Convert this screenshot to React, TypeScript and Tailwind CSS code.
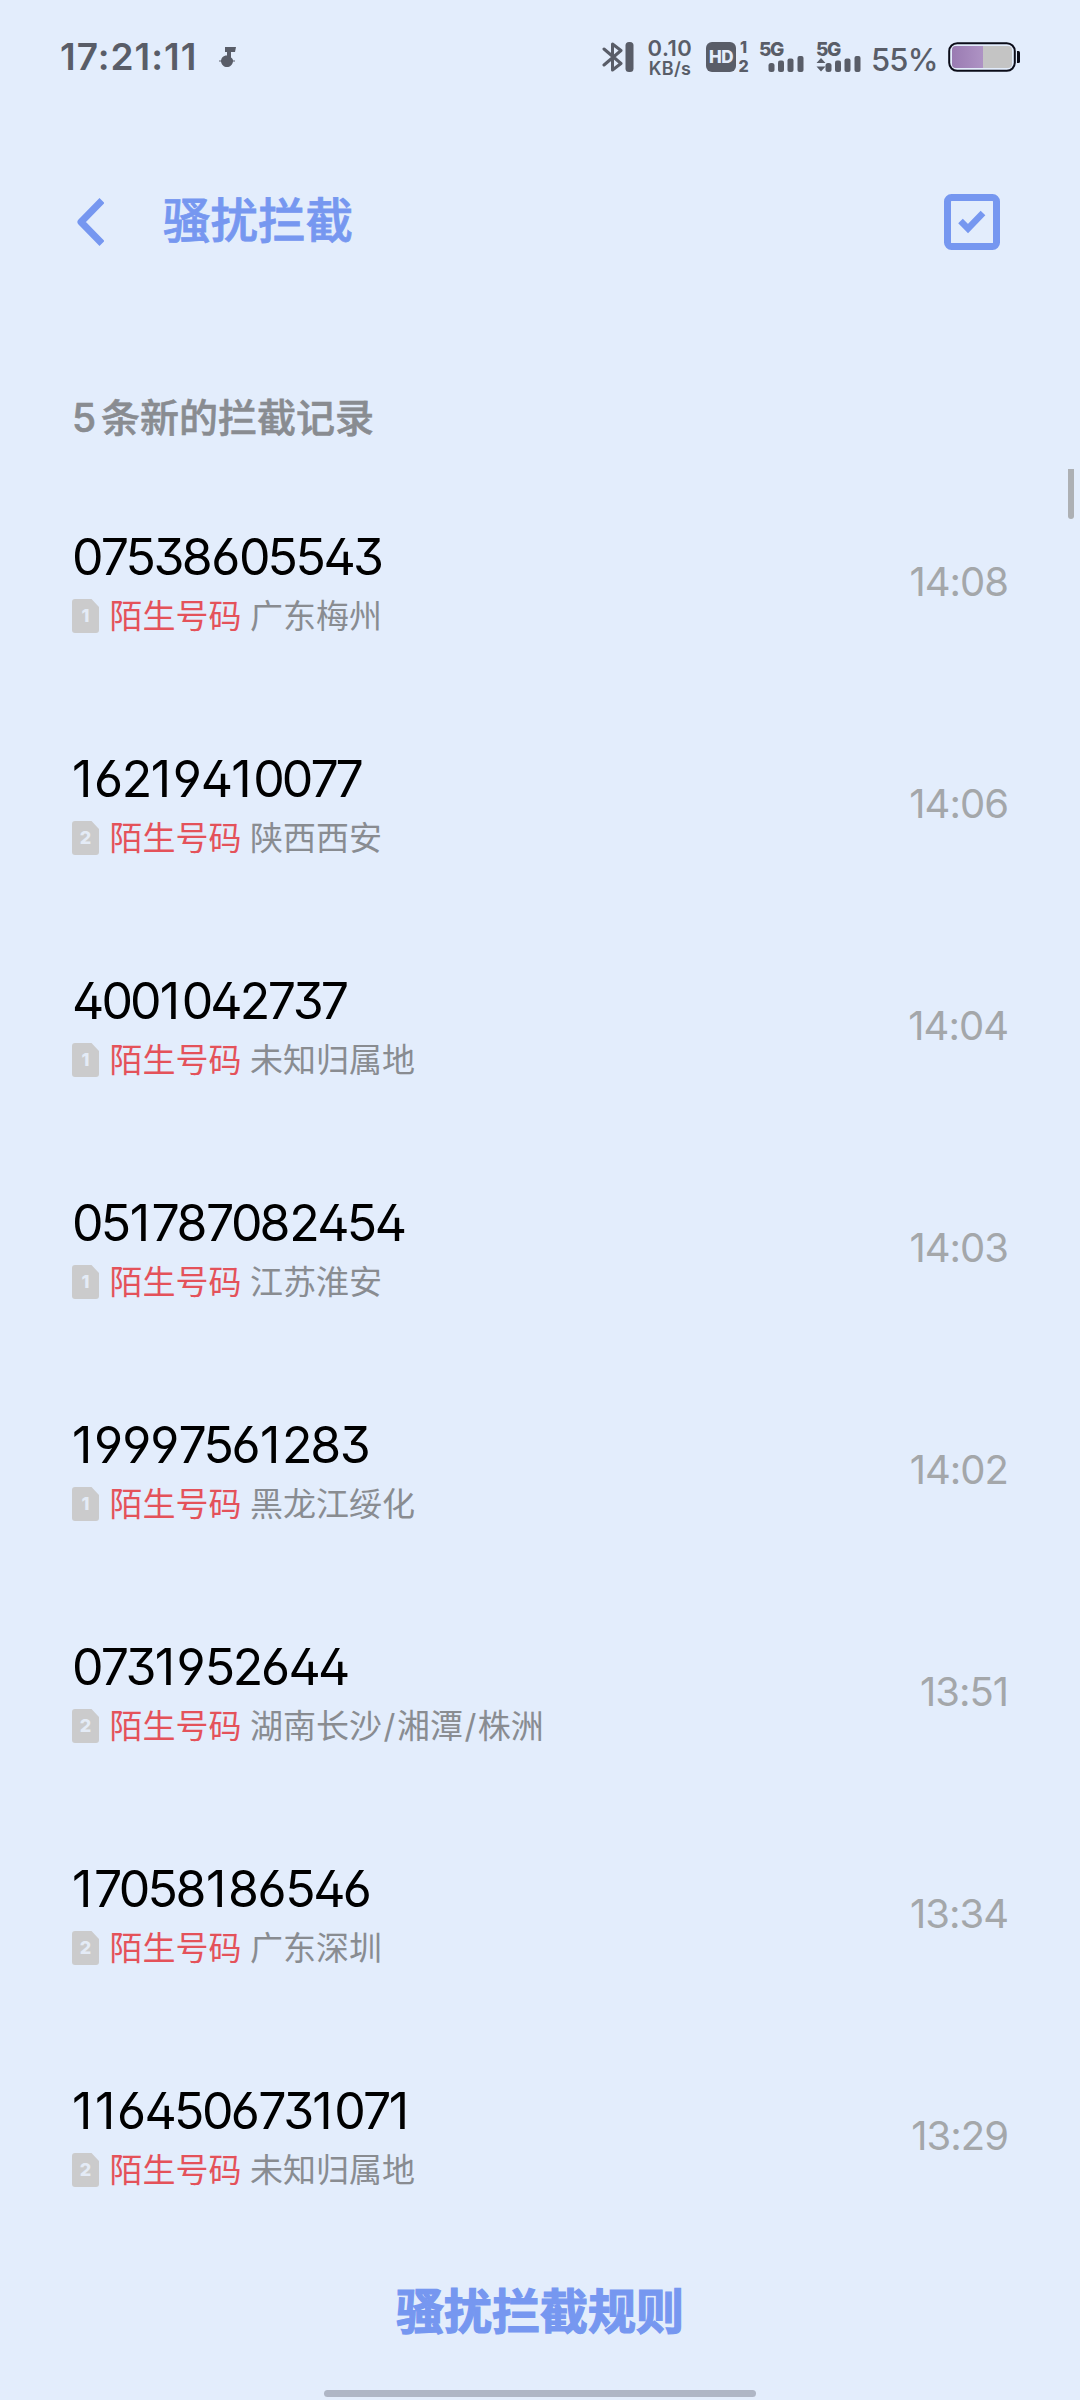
import React from 'react';

interface BlockedCall {
  number: string;
  sim: 1 | 2;
  place: string;
  time: string;
}

const calls: BlockedCall[] = [
  { number: '07538605543', sim: 1, place: '广东梅州', time: '14:08' },
  { number: '16219410077', sim: 2, place: '陕西西安', time: '14:06' },
  { number: '4001042737', sim: 1, place: '未知归属地', time: '14:04' },
  { number: '051787082454', sim: 1, place: '江苏淮安', time: '14:03' },
  { number: '19997561283', sim: 1, place: '黑龙江绥化', time: '14:02' },
  { number: '0731952644', sim: 2, place: '湖南长沙/湘潭/株洲', time: '13:51' },
  { number: '17058186546', sim: 2, place: '广东深圳', time: '13:34' },
  { number: '1164506731071', sim: 2, place: '未知归属地', time: '13:29' },
];

const digitSpacing: Record<string, string> = {
  '0': '-mr-[0.5px]',
  '1': 'ml-[1px] mr-[4px] first:ml-0',
  '3': '-mr-[0.5px]',
  '4': '-mr-[0.5px]',
  '6': 'mr-[1px]',
  '7': '-mr-[1px]',
  '8': 'mr-[1px]',
  '9': 'mr-[1.5px]',
};

const MusicIcon = () => (
  <svg width="18" height="22" viewBox="0 0 18 22" className="ml-[24px] mt-[1px]" fill="currentColor">
    <path d="M6 0h11l-1 5h-4v5.500c1.500 1 2 2 2 3h2v1h-2c-.5 3.500-3 5.500-6 5.500s-5.500-2-6-5.500H0v-1h2c.3-2.600 2-4.500 4.500-5H8V5H6z" />
  </svg>
);

const BluetoothIcon = () => (
  <svg width="32" height="30" viewBox="0 0 32 30" fill="none">
    <path d="M2 7l17 14.500L10.500 28V2L19 8.500 2 23" stroke="currentColor" strokeWidth="3" strokeLinejoin="round" strokeLinecap="round" />
    <rect x="23.500" y="0" width="8" height="30" rx="3.500" fill="currentColor" />
  </svg>
);

const SignalIcon = ({ data }: { data?: boolean }) => (
  <div className="relative h-[30px] w-[46px]">
    <span className="absolute left-0 top-0 text-[19px] font-extrabold leading-[15px] tracking-[-1.5px]">5G</span>
    <svg width="46" height="30" viewBox="0 0 46 30" fill="currentColor" className="absolute inset-0">
      {data && <path d="M5 16l4.500 5h-9zM5 29.500l4.500-5h-9z" />}
      <rect x="9.500" y="21" width="6" height="9" rx="2.500" />
      <rect x="19" y="18.500" width="6" height="11.500" rx="2" />
      <rect x="28.500" y="16.500" width="6" height="13.500" rx="2" />
      <rect x="38.500" y="14" width="6" height="16" rx="2" />
    </svg>
  </div>
);

const BatteryIcon = () => (
  <svg width="73" height="30" viewBox="0 0 73 30" fill="none">
    <defs>
      <linearGradient id="charge" x1="0" y1="0" x2="1" y2="0">
        <stop offset="0" stopColor="#9a7bb2" />
        <stop offset="1" stopColor="#ae93c4" />
      </linearGradient>
    </defs>
    <rect x="1.200" y="1.200" width="65.600" height="27.600" rx="8" stroke="#0b0c18" strokeWidth="2" />
    <rect x="4" y="4" width="60" height="22" rx="4" fill="#c4c4c4" />
    <path d="M8 4h27v22H8a4 4 0 0 1-4-4V8a4 4 0 0 1 4-4z" fill="url(#charge)" />
    <path d="M69 9h1.500a1.500 1.500 0 0 1 1.500 1.500v9a1.500 1.500 0 0 1-1.500 1.500H69z" fill="#0b0c18" />
  </svg>
);

const StatusBar = () => (
  <div className="flex h-[114px] shrink-0 items-center text-[#595d68]">
    <span className="-mt-[1px] ml-[60px] w-[135px] whitespace-nowrap text-[37px] font-semibold leading-none tracking-[1px]">17:21:11</span>
    <MusicIcon />
    <div className="ml-auto mr-[59px] flex items-center">
      <BluetoothIcon />
      <div className="ml-[12px] flex h-[39px] w-[48px] flex-col items-center justify-between font-semibold">
        <span className="text-[22px] leading-[20px] tracking-[0.5px]">0.10</span>
        <span className="text-[18px] leading-[17px] tracking-[0.3px]">KB/s</span>
      </div>
      <div className="ml-[12px] flex h-[30px] w-[30px] items-center justify-center rounded-[6px] bg-[#595d68] text-[17px] font-extrabold leading-none tracking-[-0.5px] text-[#e4edfc]">
        HD
      </div>
      <div className="ml-[1px] flex h-[34px] w-[13px] flex-col items-center justify-between text-[16px] font-extrabold leading-[15px]">
        <span>1</span>
        <span>2</span>
      </div>
      <div className="ml-[9px] flex gap-[11px]">
        <SignalIcon />
        <SignalIcon data />
      </div>
      <span className="ml-[9px] mt-[4px] w-[68px] text-[31px] font-medium leading-none tracking-[-0.8px]">55%</span>
      <div className="ml-[9px]">
        <BatteryIcon />
      </div>
    </div>
  </div>
);

const Header = () => (
  <header className="flex h-[216px] shrink-0 items-center pl-[76px] pr-[80px] text-[#7697f0]">
    <svg width="28" height="48" viewBox="0 0 28 48" fill="none" stroke="currentColor" strokeWidth="7">
      <path d="M26 2.500L5 24l21 21.500" strokeLinejoin="round" />
    </svg>
    <h1 className="-mt-[3px] ml-[59px] text-[47.5px] font-medium leading-none [-webkit-text-stroke:0.8px_#7697f0]">骚扰拦截</h1>
    <svg width="56" height="56" viewBox="0 0 56 56" fill="none" stroke="currentColor" className="ml-auto">
      <rect x="3.500" y="3.500" width="49" height="49" rx="4" strokeWidth="7" />
      <path d="M16.500 27l7.500 7.500L39 19" strokeWidth="6.500" />
    </svg>
  </header>
);

const PhoneNumber = ({ value }: { value: string }) => (
  <span className="flex text-[50px] leading-[60px] tracking-[-2.4px] text-black [font-feature-settings:'ss01']">
    {value.split('').map((digit, i) => (
      <span key={i} className={digitSpacing[digit]}>{digit}</span>
    ))}
  </span>
);

const SimBadge = ({ sim }: { sim: number }) => (
  <span className="relative flex h-[34px] w-[27px] items-center justify-center text-[18px] font-extrabold leading-none text-[#e4ebf6]">
    <svg width="27" height="34" viewBox="0 0 27 34" className="absolute inset-0" fill="#cbcbcc">
      <path d="M3 0h16.500L27 8v23a3 3 0 0 1-3 3H3a3 3 0 0 1-3-3V3a3 3 0 0 1 3-3z" />
    </svg>
    <span className="relative">{sim}</span>
  </span>
);

const CallRow = ({ call }: { call: BlockedCall }) => (
  <li className="flex h-[222px] items-center justify-between pl-[72px] pr-[72px]">
    <div className="-mt-[2px] flex flex-col">
      <PhoneNumber value={call.number} />
      <div className="mt-[12px] flex h-[34px] items-center text-[33px] leading-none">
        <SimBadge sim={call.sim} />
        <span className="ml-[10.5px] text-[#e4525a]">陌生号码</span>
        <span className="ml-[8.5px] text-[#898c91]">
          {call.place.split('/').map((part, i) => (
            <React.Fragment key={part}>
              {i > 0 && <span className="mx-[1.5px]">/</span>}
              {part}
            </React.Fragment>
          ))}
        </span>
      </div>
    </div>
    <span className="mt-[2px] text-[40px] leading-none tracking-[-1px] text-[#a4a7aa]">{call.time}</span>
  </li>
);

export default function App() {
  return (
    <div className="relative flex h-[2400px] w-[1080px] flex-col overflow-hidden bg-[#e3edfc] font-['Inter','Noto_Sans_CJK_SC',sans-serif]">
      <StatusBar />
      <Header />
      <div className="flex h-[140px] shrink-0 items-center pl-[72px] pt-[35px] text-[39px] font-medium leading-none text-[#898c91] [-webkit-text-stroke:0.6px_#898c91]">
        <span className="mr-[5px]">5</span>条新的拦截记录
      </div>
      <ul className="shrink-0">
        {calls.map(call => (
          <CallRow key={call.number} call={call} />
        ))}
      </ul>
      <button className="h-[132px] w-full text-center text-[48px] font-bold leading-none text-[#7697f0] [-webkit-text-stroke:1.2px_#7697f0]">骚扰拦截规则</button>

      {/* scrollbar */}
      <div className="absolute right-[6px] top-[469px] h-[50px] w-[6px] rounded-b-full bg-[#adb0b4]" />
      {/* gesture bar */}
      <div className="absolute bottom-[3px] left-[324px] h-[7px] w-[432px] rounded-full bg-[#afb6c5]" />
    </div>
  );
}
